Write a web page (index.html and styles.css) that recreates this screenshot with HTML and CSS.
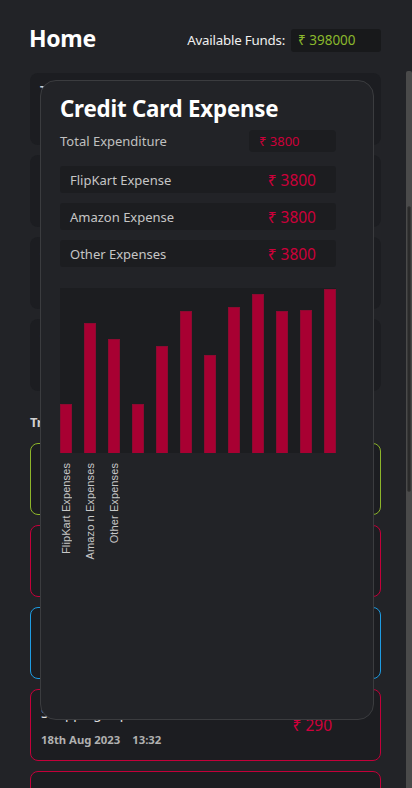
FILE: index.html
```html
<!DOCTYPE html>
<html lang="en">
<head>
<meta charset="utf-8">
<title>Home</title>
<link rel="stylesheet" href="styles.css">
</head>
<body>
<div class="page">
  <header class="top">
    <h1 class="home">Home</h1>
    <div class="funds">
      <span class="funds-label">Available Funds:</span>
      <span class="funds-box">₹ 398000</span>
    </div>
  </header>

  <section class="summary">
    <div class="sum-card"><span class="sum-title">Total Balance</span></div>
    <div class="sum-card"><span class="sum-title">Bank Account</span></div>
    <div class="sum-card"><span class="sum-title">Credit Card</span></div>
    <div class="sum-card"><span class="sum-title">Cash</span></div>
  </section>

  <h2 class="section-title">Transactions</h2>
  <section class="tx-list">
    <div class="tx tx-green"></div>
    <div class="tx tx-red"></div>
    <div class="tx tx-blue"></div>
    <div class="tx tx-red">
      <div class="tx-info">
        <span class="tx-name">Shopping Expense</span>
        <span class="tx-date">18th Aug 2023<span class="tx-time">13:32</span></span>
      </div>
      <span class="tx-amount">₹ 290</span>
    </div>
    <div class="tx tx-red"></div>
  </section>
</div>

<div class="scrollbar">
  <div class="track"><div class="thumb"></div></div>
</div>

<div class="modal">
  <h2 class="modal-title">Credit Card Expense</h2>
  <div class="total-row">
    <span class="total-label">Total Expenditure</span>
    <span class="total-box">₹ 3800</span>
  </div>
  <div class="exp-rows">
    <div class="exp-row"><span>FlipKart Expense</span><span class="exp-amt">₹ 3800</span></div>
    <div class="exp-row"><span>Amazon Expense</span><span class="exp-amt">₹ 3800</span></div>
    <div class="exp-row"><span>Other Expenses</span><span class="exp-amt">₹ 3800</span></div>
  </div>
  <div class="chart">
    <div class="bar" style="height:49px"></div>
    <div class="bar" style="height:130px"></div>
    <div class="bar" style="height:114px"></div>
    <div class="bar" style="height:49px"></div>
    <div class="bar" style="height:107px"></div>
    <div class="bar" style="height:142px"></div>
    <div class="bar" style="height:98px"></div>
    <div class="bar" style="height:146px"></div>
    <div class="bar" style="height:159px"></div>
    <div class="bar" style="height:142px"></div>
    <div class="bar" style="height:143px"></div>
    <div class="bar" style="height:164px"></div>
  </div>
  <div class="axis">
    <span class="axis-label">FlipKart Expenses</span>
    <span class="axis-label">Amazo n Expenses</span>
    <span class="axis-label">Other Expenses</span>
  </div>
</div>
</body>
</html>
```

FILE: styles.css
```css
* { box-sizing: border-box; }
html, body {
  margin: 0;
  height: 788px;
  overflow: hidden;
}
body {
  background: #222327;
  font-family: "Noto Sans", "Open Sans", sans-serif;
  color: #e6e6e6;
  display: flex;
}
.page {
  flex: 1;
  padding: 0 25px 0 30px;
}
.top {
  height: 73px;
  display: flex;
  align-items: center;
  justify-content: space-between;
  padding-top: 6px;
}
.home {
  margin: -3px 0 0 -1px;
  font-size: 23px;
  font-weight: 700;
  color: #ffffff;
  letter-spacing: -0.3px;
}
.funds {
  display: flex;
  align-items: center;
  gap: 6px;
  margin-top: 1px;
}
.funds-label {
  font-size: 13.3px;
  color: #f0f0f0;
  letter-spacing: -0.2px;
}
.funds-box {
  width: 90px;
  height: 23px;
  line-height: 23px;
  background: #18191b;
  border-radius: 3px;
  padding-left: 7px;
  color: #8ab72c;
  font-size: 13.5px;
}
.summary {
  display: flex;
  flex-direction: column;
  gap: 10px;
}
.sum-card {
  height: 72px;
  background: #1c1d21;
  border-radius: 8px;
  padding: 4px 10px;
}
.sum-title {
  font-size: 11px;
  font-weight: 700;
  color: #cfcfcf;
}
.section-title {
  margin: 22px 0 12px;
  font-size: 13px;
  line-height: 18px;
  font-weight: 700;
  color: #cfcfcf;
}
.tx-list {
  display: flex;
  flex-direction: column;
  gap: 10px;
}
.tx {
  height: 72px;
  border-radius: 8px;
  background: #1c1d21;
  border: 1px solid #c4003a;
  display: flex;
  align-items: center;
  justify-content: space-between;
  padding: 0 48px 0 10px;
}
.tx-green { border-color: #8db52a; }
.tx-blue { border-color: #1e9ce2; }
.tx-red { border-color: #c4003a; }
.tx-info {
  display: flex;
  flex-direction: column;
  gap: 10px;
  padding-top: 1px;
}
.tx-name {
  font-size: 13.5px;
  line-height: 18px;
  color: #e0e0e0;
}
.tx-date {
  font-size: 11.3px;
  line-height: 15px;
  font-weight: 700;
  color: #b0b0b0;
}
.tx-time { margin-left: 12px; }
.tx-amount {
  font-size: 15.5px;
  color: #d0003c;
}
.scrollbar {
  width: 6px;
  padding-top: 71px;
  display: flex;
}
.track {
  flex: 1;
  background: #4a4a4a;
  border-radius: 2px 2px 0 0;
  padding: 135px 1px 0 1px;
}
.thumb {
  height: 286px;
  background: #2a2a2a;
  border: 1px solid #383838;
  border-radius: 2px;
}
.modal {
  position: absolute;
  left: 40px;
  top: 80px;
  width: 334px;
  height: 640px;
  background: #222327;
  border: 1px solid #3b3c3f;
  border-radius: 16px;
  padding: 12px 0 0 19px;
}
.modal > * { width: 276px; }
.modal-title {
  margin: 0;
  font-size: 22.3px;
  line-height: 32px;
  font-weight: 700;
  color: #ffffff;
  letter-spacing: -0.2px;
}
.total-row {
  margin-top: 5px;
  display: flex;
  justify-content: space-between;
  align-items: center;
}
.total-label {
  font-size: 13px;
  color: #c0c0c0;
}
.total-box {
  width: 87px;
  height: 22px;
  line-height: 22px;
  background: #1c1d20;
  border-radius: 4px;
  padding-left: 10px;
  font-size: 13px;
  color: #cc003a;
}
.exp-rows {
  margin-top: 14px;
  display: flex;
  flex-direction: column;
  gap: 10px;
}
.exp-row {
  height: 27px;
  background: #1c1d20;
  border-radius: 3px;
  display: flex;
  justify-content: space-between;
  align-items: center;
  padding: 0 20px 0 10px;
  font-size: 13px;
  color: #c6c6c6;
}
.exp-amt {
  font-size: 15.5px;
  color: #cc003a;
}
.chart {
  margin-top: 21px;
  height: 165px;
  background: #1c1d20;
  display: flex;
  align-items: flex-end;
  justify-content: space-between;
}
.bar {
  width: 12px;
  background: #a80032;
  border: 1px solid #8c0a30;
  border-bottom: none;
}
.axis {
  margin-top: 10px;
  margin-left: -2px;
  display: flex;
  gap: 7px;
  align-items: flex-start;
}
.axis-label {
  width: 17px;
  writing-mode: vertical-rl;
  transform: rotate(180deg);
  font-size: 11px;
  line-height: 17px;
  color: #c8c8c8;
  font-family: "Liberation Sans", sans-serif;
  letter-spacing: 0.1px;
}
```
